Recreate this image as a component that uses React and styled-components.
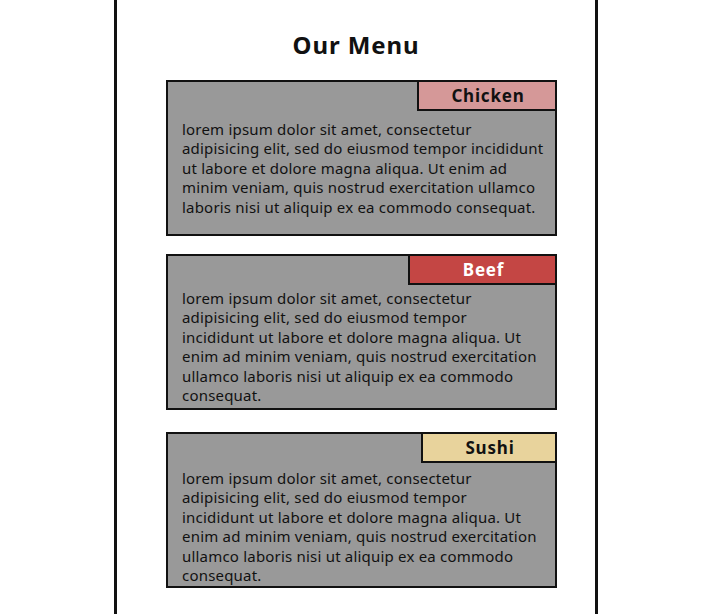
import React from 'react';
import styled, { createGlobalStyle } from 'styled-components';

const GlobalStyle = createGlobalStyle`
    html, body
    {
        margin: 0;
        padding: 0;
        background: #ffffff;
        font-family: "Noto Sans", "Open Sans", sans-serif;
        color: #111111;
    }
`;

let items = [
    {
        name: "Chicken",
        bg: "#d59898",
        fg: "#111111",
        width: 140,
        space: 0,
        offset: 9,
        lines: [
            "lorem ipsum dolor sit amet, consectetur",
            "adipisicing elit, sed do eiusmod tempor incididunt",
            "ut labore et dolore magna aliqua. Ut enim ad",
            "minim veniam, quis nostrud exercitation ullamco",
            "laboris nisi ut aliquip ex ea commodo consequat."
        ]
    },
    {
        name: "Beef",
        bg: "#c44644",
        fg: "#ffffff",
        width: 149,
        space: 18,
        offset: 4,
        lines: [
            "lorem ipsum dolor sit amet, consectetur",
            "adipisicing elit, sed do eiusmod tempor",
            "incididunt ut labore et dolore magna aliqua. Ut",
            "enim ad minim veniam, quis nostrud exercitation",
            "ullamco laboris nisi ut aliquip ex ea commodo",
            "consequat."
        ]
    },
    {
        name: "Sushi",
        bg: "#e8d39c",
        fg: "#111111",
        width: 136,
        space: 22,
        offset: 6,
        lines: [
            "lorem ipsum dolor sit amet, consectetur",
            "adipisicing elit, sed do eiusmod tempor",
            "incididunt ut labore et dolore magna aliqua. Ut",
            "enim ad minim veniam, quis nostrud exercitation",
            "ullamco laboris nisi ut aliquip ex ea commodo",
            "consequat."
        ]
    }
];

function App()
{
    return (
        <>
            <GlobalStyle />
            <Page>
                <Title>Our Menu</Title>
                <List>
                    {items.map((item) => (
                        <Card key={item.name} $space={item.space}>
                            <Tag $bg={item.bg} $fg={item.fg} $width={item.width}>{item.name}</Tag>
                            <Text $offset={item.offset}>
                                {item.lines.map((l, i) => <span key={i}>{l}</span>)}
                            </Text>
                        </Card>
                    ))}
                </List>
            </Page>
        </>
    );
}

let Page = styled.div`
    box-sizing: border-box;
    width: 484px;
    min-height: 640px;
    margin: 0 auto;
    border-left: 3px solid #111111;
    border-right: 3px solid #111111;
    padding-top: 29px;
`;

let Title = styled.h1`
    margin: 0;
    text-align: center;
    font-size: 24px;
    line-height: 32px;
    font-weight: 700;
    letter-spacing: 0.9px;
`;

let List = styled.div`
    display: flex;
    flex-direction: column;
    margin-top: 19px;
    padding-left: 49px;
`;

let Card = styled.div`
    box-sizing: border-box;
    width: 391px;
    height: 156px;
    margin-top: ${p => p.$space}px;
    background: #999999;
    border: 2px solid #111111;
    display: flex;
    flex-direction: column;
`;

let Tag = styled.div`
    box-sizing: border-box;
    align-self: flex-end;
    width: ${p => p.$width}px;
    height: 31px;
    margin: -2px -2px 0 0;
    padding-left: 2px;
    background: ${p => p.$bg};
    color: ${p => p.$fg};
    border: 2px solid #111111;
    display: flex;
    align-items: center;
    justify-content: center;
    font-size: 17px;
    font-weight: 700;
    letter-spacing: 0.8px;
`;

let Text = styled.div`
    margin-top: ${p => p.$offset}px;
    padding-left: 14px;
    display: flex;
    flex-direction: column;
    font-size: 15px;
    line-height: 19.4px;
    letter-spacing: 0.2px;
    white-space: nowrap;

    span
    {
        display: block;
    }
`;

export default App;
